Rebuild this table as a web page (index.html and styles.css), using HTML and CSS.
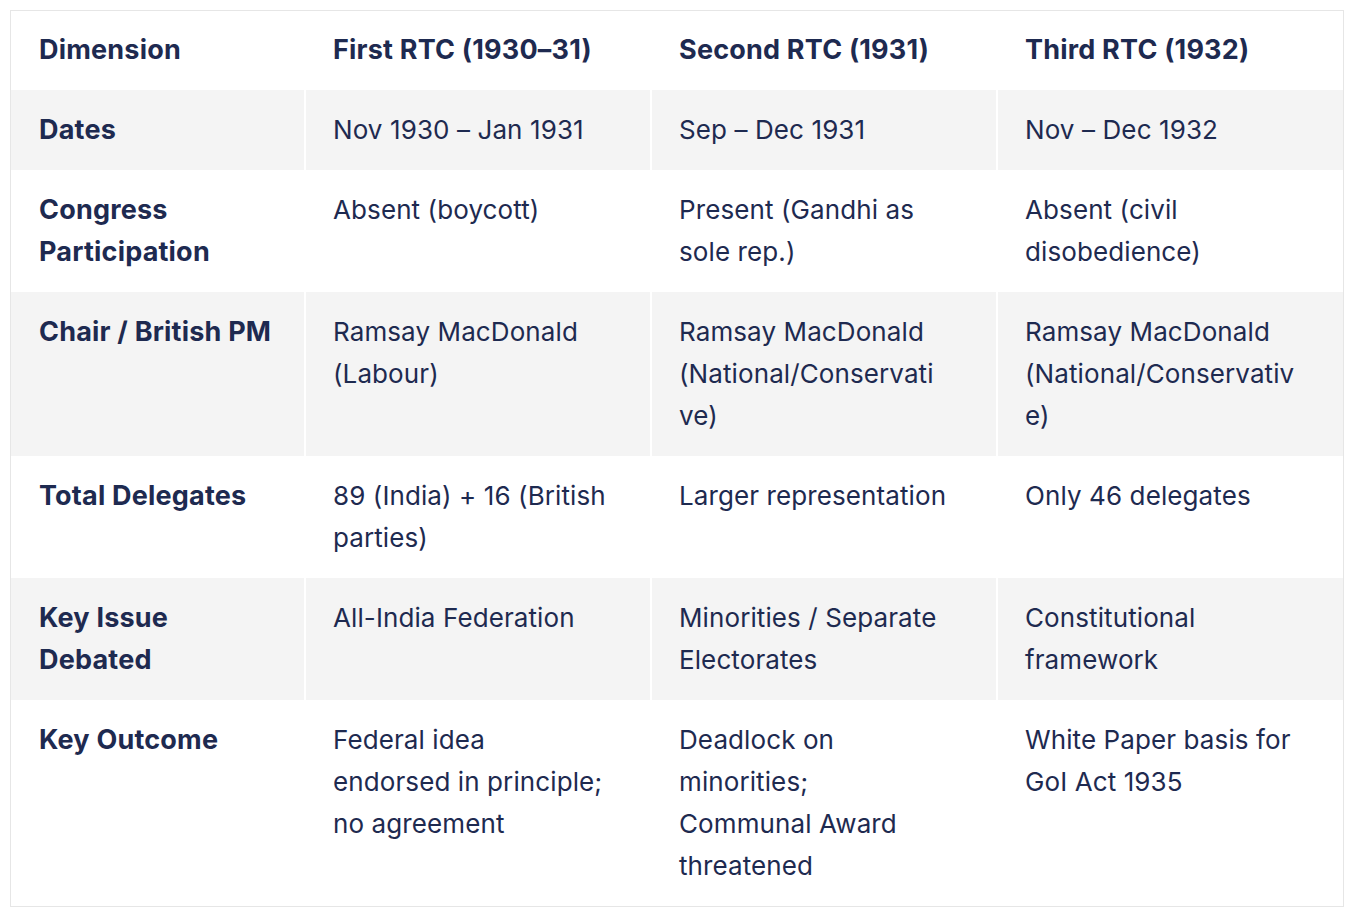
FILE: index.html
```html
<!DOCTYPE html>
<html lang="en">
<head>
<meta charset="utf-8">
<title>Round Table Conferences</title>
<link rel="stylesheet" href="styles.css">
</head>
<body>
<table class="rtc">
  <colgroup>
    <col class="c1"><col class="c2"><col class="c3"><col class="c4">
  </colgroup>
  <thead>
    <tr>
      <th>Dimension</th>
      <th>First RTC (1930–31)</th>
      <th>Second RTC (1931)</th>
      <th>Third RTC (1932)</th>
    </tr>
  </thead>
  <tbody>
    <tr class="alt">
      <th>Dates</th>
      <td>Nov 1930 – Jan 1931</td>
      <td>Sep – Dec 1931</td>
      <td>Nov – Dec 1932</td>
    </tr>
    <tr>
      <th>Congress<br>Participation</th>
      <td>Absent (boycott)</td>
      <td>Present (Gandhi as<br>sole rep.)</td>
      <td>Absent (civil<br>disobedience)</td>
    </tr>
    <tr class="alt">
      <th>Chair / British PM</th>
      <td>Ramsay MacDonald<br>(Labour)</td>
      <td>Ramsay MacDonald<br>(National/Conservati<br>ve)</td>
      <td>Ramsay MacDonald<br>(National/Conservativ<br>e)</td>
    </tr>
    <tr>
      <th>Total Delegates</th>
      <td>89 (India) + 16 (British<br>parties)</td>
      <td>Larger representation</td>
      <td>Only 46 delegates</td>
    </tr>
    <tr class="alt">
      <th>Key Issue<br>Debated</th>
      <td>All-India Federation</td>
      <td>Minorities / Separate<br>Electorates</td>
      <td>Constitutional<br>framework</td>
    </tr>
    <tr>
      <th>Key Outcome</th>
      <td>Federal idea<br>endorsed in principle;<br>no agreement</td>
      <td>Deadlock on<br>minorities;<br>Communal Award<br>threatened</td>
      <td>White Paper basis for<br>GoI Act 1935</td>
    </tr>
  </tbody>
</table>
</body>
</html>
```

FILE: styles.css
```css
html, body {
  margin: 0;
  padding: 0;
  background: #ffffff;
}
body {
  padding: 10px;
  font-family: Inter, "Noto Sans", "Liberation Sans", sans-serif;
  color: #1e2a50;
}
.rtc {
  width: 1334px;
  border-collapse: separate;
  border-spacing: 0;
  border: 1px solid #e6e6e6;
  table-layout: fixed;
  font-size: 26px;
  line-height: 42px;
}
.c1 { width: 293px; }
.c2 { width: 346px; }
.c3 { width: 346px; }
.c4 { width: 347px; }
.rtc th, .rtc td {
  text-align: left;
  vertical-align: top;
  padding: 19px 20px 19px 28px;
  overflow-wrap: anywhere;
}
.rtc thead th {
  padding-top: 18px;
}
.rtc th {
  font-weight: 700;
  font-size: 27px;
  letter-spacing: 0.2px;
}
.rtc td {
  font-weight: 400;
  letter-spacing: 0.1px;
  border-left: 2px solid transparent;
  padding-left: 27px;
}
.rtc thead th + th {
  border-left: 2px solid #ffffff;
  padding-left: 27px;
}
.alt th, .alt td {
  background: #f4f4f4;
}
.alt td {
  border-left-color: #ffffff;
}
```
